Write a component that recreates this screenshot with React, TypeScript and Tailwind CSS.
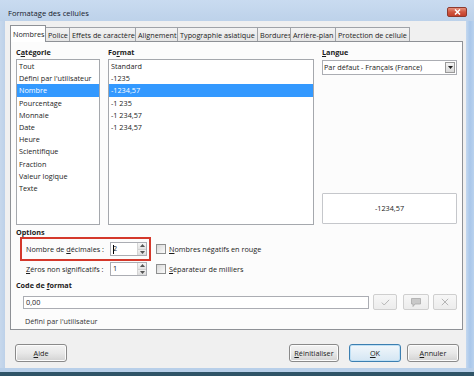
import React from 'react';

const U = ({ children }: { children: React.ReactNode }) => (
  <span className="underline underline-offset-[1px] decoration-[0.8px]">{children}</span>
);

const tabs = [
  { label: 'Nombres', w: 36, active: true },
  { label: 'Police', w: 24 },
  { label: 'Effets de caractère', w: 66 },
  { label: 'Alignement', w: 42 },
  { label: 'Typographie asiatique', w: 80 },
  { label: 'Bordures', w: 33 },
  { label: 'Arrière-plan', w: 45 },
  { label: 'Protection de cellule', w: 74 },
];

const categories = [
  'Tout',
  "Défini par l'utilisateur",
  'Nombre',
  'Pourcentage',
  'Monnaie',
  'Date',
  'Heure',
  'Scientifique',
  'Fraction',
  'Valeur logique',
  'Texte',
];

const formats = ['Standard', '-1235', '-1234,57', '-1 235', '-1 234,57', '-1 234,57'];

function ListBox({ items, selected, width }: { items: string[]; selected: number; width: string }) {
  return (
    <div className={`${width} h-[166px] border border-[#a5a8ad] bg-white overflow-hidden`}>
      {items.map((it, i) => (
        <div
          key={i}
          className={`h-[12.2px] leading-[12.2px] pl-[2px] whitespace-nowrap ${
            i === selected ? 'bg-[#3399ff] text-white' : ''
          }`}
        >
          {it}
        </div>
      ))}
    </div>
  );
}

function Spin({ value, cursor }: { value: string; cursor?: boolean }) {
  return (
    <div className="w-[37px] h-[14px] border border-[#abadb3] bg-white flex">
      <div className="flex-1 flex items-center pl-[2px] leading-none">
        {cursor && <span className="w-[1px] h-[9px] bg-black mr-[-1px]" />}
        <span>{value}</span>
      </div>
      <div className="w-[9px] flex flex-col border-l border-[#d5d5d5]">
        <div className="flex-1 flex items-center justify-center bg-gradient-to-b from-[#f6f6f6] to-[#e2e2e2] border-b border-[#d0d0d0]">
          <svg width="5" height="3" viewBox="0 0 5 3"><path d="M0 3 L2.5 0 L5 3Z" fill="#555" /></svg>
        </div>
        <div className="flex-1 flex items-center justify-center bg-gradient-to-b from-[#f0f0f0] to-[#dcdcdc]">
          <svg width="5" height="3" viewBox="0 0 5 3"><path d="M0 0 L2.5 3 L5 0Z" fill="#555" /></svg>
        </div>
      </div>
    </div>
  );
}

function Check() {
  return (
    <div className="w-[10px] h-[10px] border border-[#8e8f8f] bg-gradient-to-br from-[#d8d8d8] to-[#fbfbfb] shrink-0" />
  );
}

function IconBtn({ w, children }: { w: string; children: React.ReactNode }) {
  return (
    <div className={`${w} h-[16px] border border-[#cfcfcf] rounded-[2px] bg-gradient-to-b from-[#f7f7f7] to-[#ececec] flex items-center justify-center`}>
      {children}
    </div>
  );
}

function Btn({ children, w, focus }: { children: React.ReactNode; w: string; focus?: boolean }) {
  return (
    <div
      className={`${w} h-[18px] rounded-[3px] border flex items-center justify-center ${
        focus
          ? 'border-[#3c7fb1] bg-gradient-to-b from-[#f2f7fb] to-[#d4e6f3] shadow-[inset_0_0_0_1px_#bfe0f5]'
          : 'border-[#8a8a8a] bg-gradient-to-b from-[#f3f3f3] via-[#e8e8e8] to-[#d2d2d2] shadow-[inset_0_0_0_1px_#fcfcfc]'
      }`}
    >
      {children}
    </div>
  );
}

export default function App() {
  return (
    <div className="w-[474px] h-[376px] overflow-hidden bg-[#bcd2ec] font-['Open_Sans',sans-serif] text-[7.25px] text-[#1b1b1b] flex flex-col">
      {/* Title bar */}
      <div className="h-[21px] flex items-start justify-between pl-[8px] pr-[7px] bg-gradient-to-b from-[#c9dbf0] to-[#bdd2ea]">
        <span className="mt-[7px] leading-[12px] text-[7.6px] text-[#15202b]">Formatage des cellules</span>
        <div className="mt-[7px] w-[20px] h-[10px] rounded-[2px] border border-[#8d3a2e] bg-gradient-to-b from-[#e4907c] via-[#d0563f] to-[#c43f2a] flex items-center justify-center">
          <svg width="7" height="6" viewBox="0 0 7 6">
            <path d="M1 0.5 L6 5.5 M6 0.5 L1 5.5" stroke="white" strokeWidth="1.5" />
          </svg>
        </div>
      </div>

      {/* Middle */}
      <div className="h-[347px] flex">
        <div className="w-[5px] bg-gradient-to-r from-[#c7d8ec] to-[#bdd1e9]" />
        <div className="w-[461px] bg-[#f0f0f0] flex flex-col pt-[4px] pl-[5px] pr-[3px]">
          {/* Tabs */}
          <div className="relative z-10 h-[16px] flex items-end">
            {tabs.map((t) =>
              t.active ? (
                <div
                  key={t.label}
                  style={{ width: t.w }}
                  className="h-[17px] -mb-px bg-white border border-b-0 border-[#8e9196] pl-[2px] leading-[16px] whitespace-nowrap"
                >
                  {t.label}
                </div>
              ) : (
                <div
                  key={t.label}
                  style={{ width: t.w }}
                  className="h-[14px] bg-gradient-to-b from-[#f3f3f3] to-[#e5e5e5] border border-l-0 border-b-0 border-[#a0a3a8] pl-[2px] leading-[14px] whitespace-nowrap overflow-hidden"
                >
                  {t.label}
                </div>
              )
            )}
          </div>

          {/* Panel */}
          <div className="w-[453px] h-[289px] border border-[#8e9196] bg-[#fcfcfc] flex flex-col pl-[5px]">
            <div className="flex pt-[4px] gap-[8px]">
              <div className="flex flex-col w-[84px]">
                <div className="h-[12px] leading-[12px] font-bold mb-[1px]">C<U>a</U>tégorie</div>
                <ListBox items={categories} selected={2} width="w-[84px]" />
              </div>
              <div className="flex flex-col w-[206px]">
                <div className="h-[12px] leading-[12px] font-bold mb-[1px]">Fo<U>r</U>mat</div>
                <ListBox items={formats} selected={2} width="w-[206px]" />
              </div>
              <div className="flex flex-col w-[135px]">
                <div className="h-[12px] leading-[12px] font-bold mb-[1px]"><U>L</U>angue</div>
                <div className="h-[166px] flex flex-col justify-between pt-[1px] pb-[1px]">
                  <div className="h-[15px] border border-[#abadb3] bg-white flex items-center justify-between pl-[1px] pr-[1px]">
                    <span className="whitespace-nowrap">Par défaut - Français (France)</span>
                    <div className="w-[10px] h-[11px] border border-[#9a9a9a] bg-gradient-to-b from-[#f4f4f4] to-[#d8d8d8] flex items-center justify-center">
                      <svg width="5" height="3" viewBox="0 0 5 3"><path d="M0 0 L2.5 3 L5 0Z" fill="#222" /></svg>
                    </div>
                  </div>
                  <div className="h-[31px] border border-[#c5c7cb] rounded-[1px] bg-white flex items-center justify-center">
                    -1234,57
                  </div>
                </div>
              </div>
            </div>

            {/* Options */}
            <div className="mt-[3px] h-[9px] leading-[9px] font-bold">Options</div>
            <div className="flex items-center">
              <div className="ml-[4px] w-[131px] h-[24px] border-2 border-[#d4382b] flex items-center pl-[4px]">
                <div className="w-[84px] whitespace-nowrap">Nombre de <U>d</U>écimales :</div>
                <Spin value="2" cursor />
              </div>
              <div className="ml-[5px] flex items-center gap-[3px]">
                <Check />
                <span className="whitespace-nowrap"><U>N</U>ombres négatifs en rouge</span>
              </div>
            </div>
            <div className="mt-[1px] flex items-center h-[14px]">
              <div className="ml-[10px] w-[84px] whitespace-nowrap"><U>Z</U>éros non significatifs :</div>
              <Spin value="1" />
              <div className="ml-[9px] flex items-center gap-[3px]">
                <Check />
                <span className="whitespace-nowrap"><U>S</U>éparateur de milliers</span>
              </div>
            </div>

            {/* Code de format */}
            <div className="mt-[4px] h-[10px] leading-[10px] font-bold">Code de <U>f</U>ormat</div>
            <div className="mt-[4px] h-[16px] flex items-center">
              <div className="ml-[7px] w-[346px] h-[13px] border border-[#abadb3] bg-white flex items-center pl-[2px]">0,00</div>
              <div className="ml-[4px]">
                <IconBtn w="w-[24px]">
                  <svg width="9" height="7" viewBox="0 0 9 7"><path d="M0.8 3.6 L3.2 6 L8.2 0.8" stroke="#b5b5b5" strokeWidth="1" fill="none" /></svg>
                </IconBtn>
              </div>
              <div className="ml-[6px]">
                <IconBtn w="w-[26px]">
                  <svg width="10" height="9" viewBox="0 0 10 9">
                    <path d="M0.5 0.5 H9.5 V6 H4 L2 8.5 V6 H0.5 Z" fill="#c9c9c9" stroke="#a9a9a9" strokeWidth="0.8" />
                  </svg>
                </IconBtn>
              </div>
              <div className="ml-[4px]">
                <IconBtn w="w-[24px]">
                  <svg width="8" height="8" viewBox="0 0 8 8"><path d="M0.8 0.8 L7.2 7.2 M7.2 0.8 L0.8 7.2" stroke="#b5b5b5" strokeWidth="1" /></svg>
                </IconBtn>
              </div>
            </div>
            <div className="mt-[6px] ml-[9px] h-[10px] leading-[10px] text-[#333]">Défini par l'utilisateur</div>
          </div>

          {/* Footer buttons */}
          <div className="mt-[14px] flex items-center pl-[5px] pr-[4px]">
            <Btn w="w-[52px]"><U>A</U>ide</Btn>
            <div className="flex-1" />
            <Btn w="w-[50px]"><U>R</U>éinitialiser</Btn>
            <div className="w-[10px]" />
            <Btn w="w-[52px]" focus><U>O</U>K</Btn>
            <div className="w-[6px]" />
            <Btn w="w-[52px]"><U>A</U>nnuler</Btn>
          </div>
        </div>
        <div className="flex-1 bg-gradient-to-r from-[#c4d8ef] via-[#a9c7ea] to-[#b9d2ee]" />
      </div>
      <div className="h-[4px] bg-[#b8cfe9]" />
      <div className="flex-1 bg-[#2f5467]" />
    </div>
  );
}
